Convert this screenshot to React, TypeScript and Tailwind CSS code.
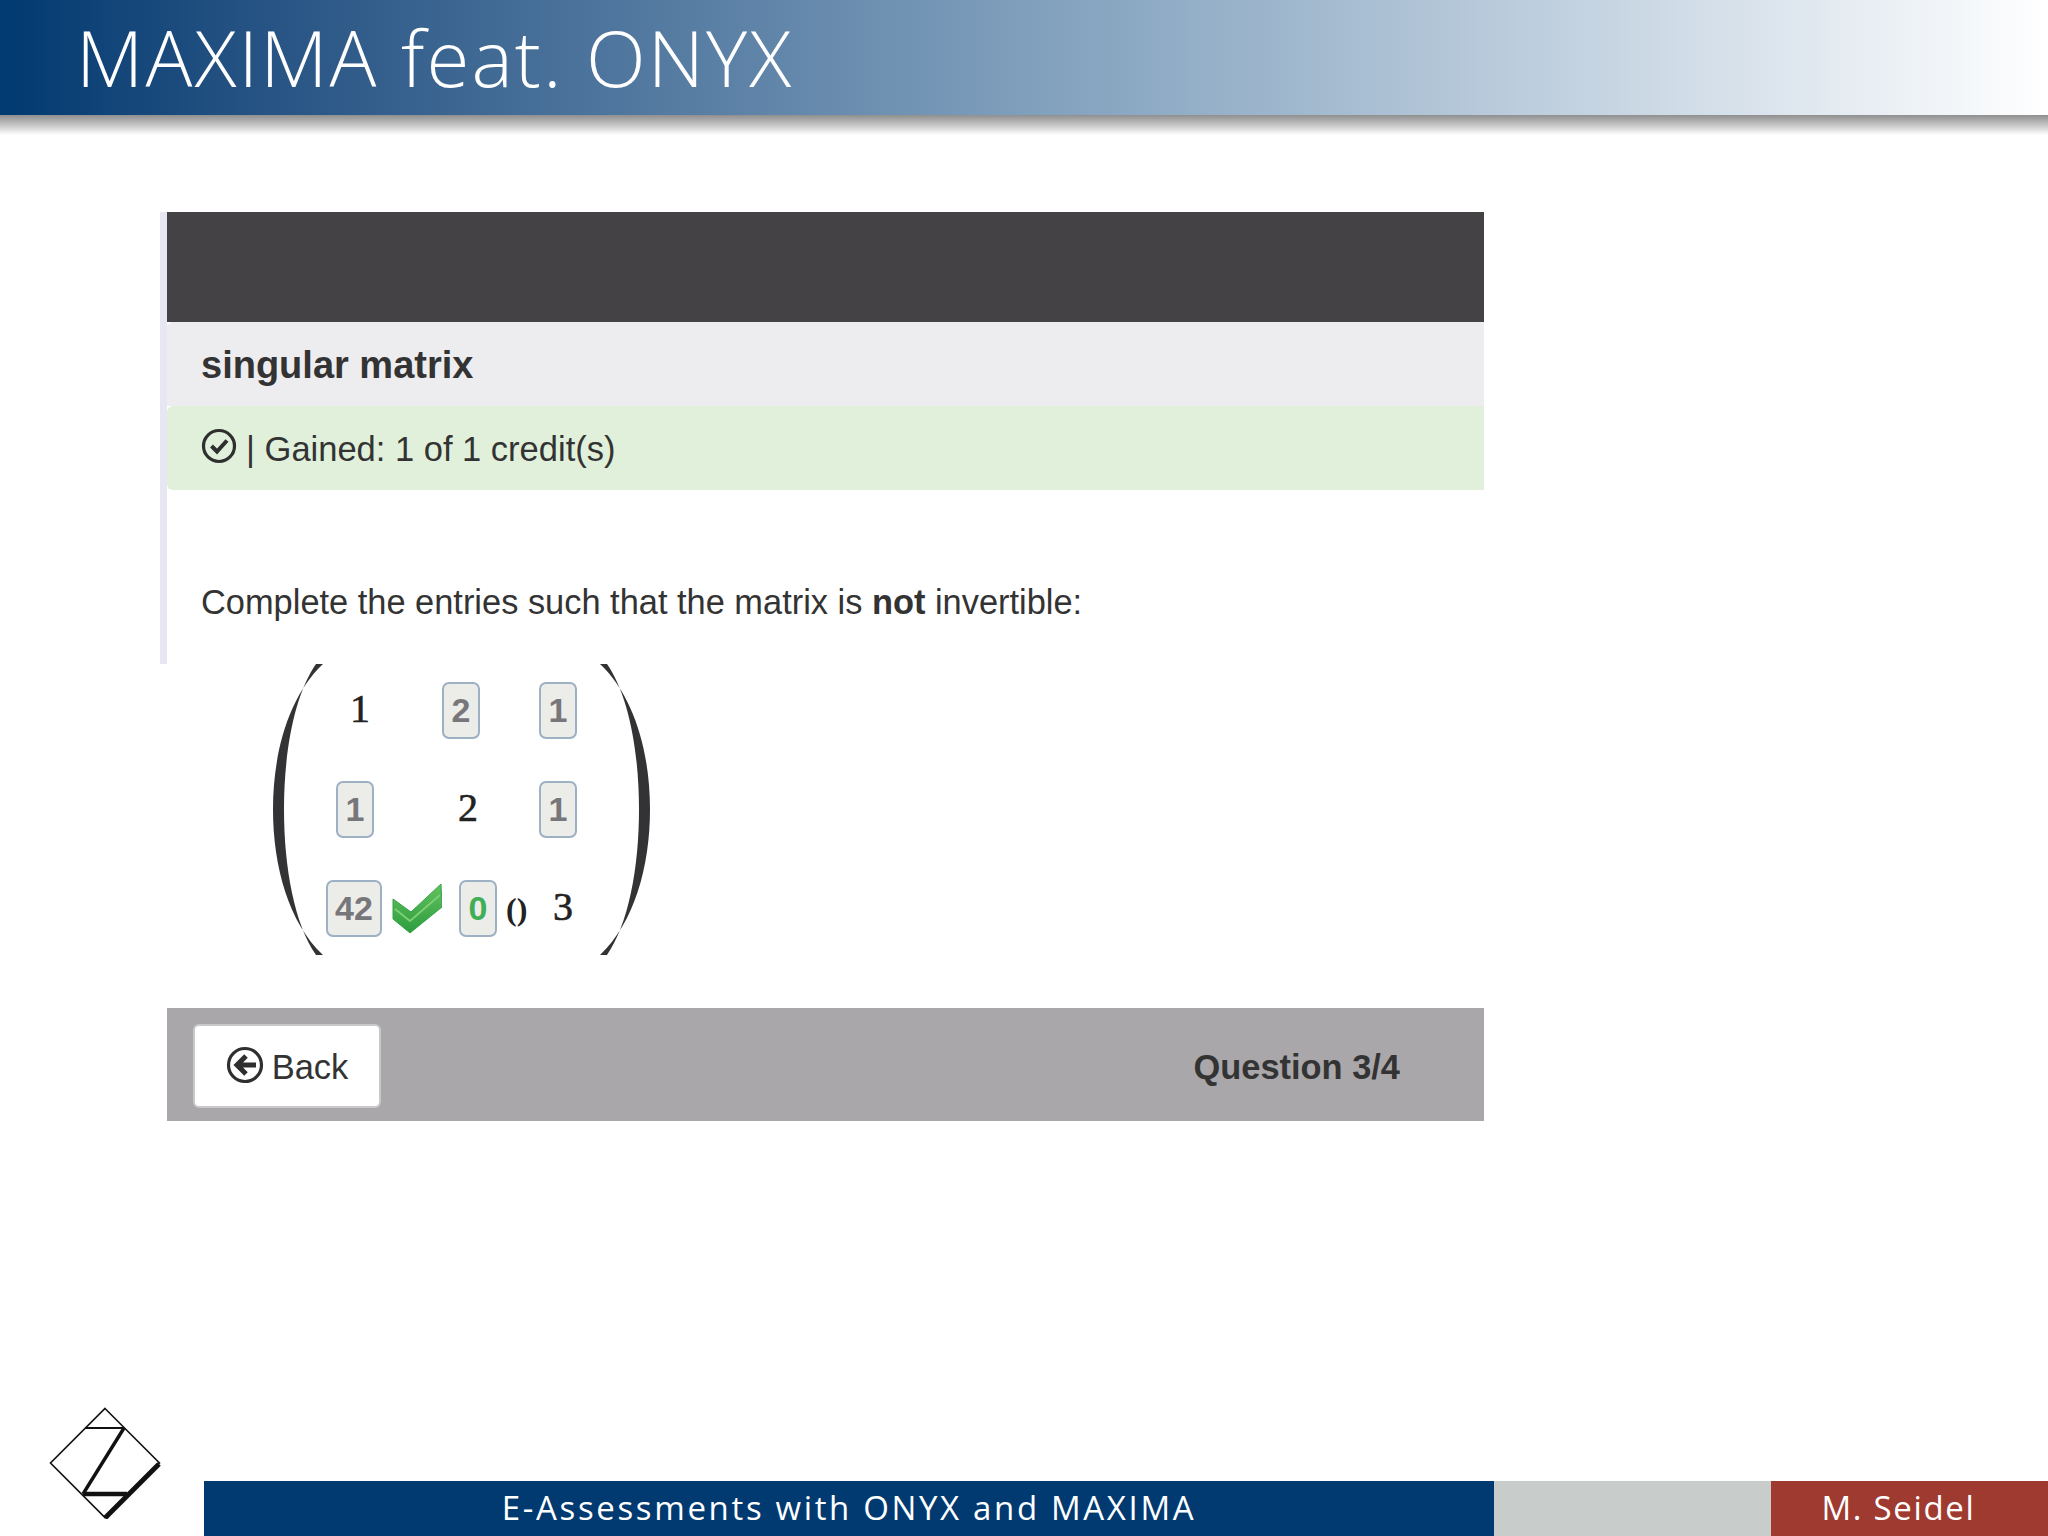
import { ReactNode } from "react";

const sans = "font-['Liberation_Sans',Arial,sans-serif]";
const math = "font-['Liberation_Serif','Times_New_Roman',serif]";

const InputBox = ({ value, wide, ok }: { value: string; wide?: boolean; ok?: boolean }) => (
  <span
    className={`${sans} ${wide ? "w-[56px]" : "w-[38px]"} ${ok ? "text-[#3fae57]" : "text-[#77767a]"} flex h-[57px] items-center justify-center rounded-[7px] border-2 border-[#9db0c4] bg-[#ecece8] text-[34px] font-bold`}
  >
    {value}
  </span>
);

const Num = ({ children }: { children: ReactNode }) => (
  <span className={`${math} -mt-[3px] text-[40px] leading-none text-[#222] [-webkit-text-stroke:0.6px_#222]`}>
    {children}
  </span>
);

const Bracket = ({ flip }: { flip?: boolean }) => (
  <svg width="50" height="291" viewBox="0 0 50 291" className={flip ? "-scale-x-100" : ""}>
    <path
      d="M50 0 C16 32 0 88 0 145.5 C0 203 16 259 50 291 L43 291 C22 261 11 205 11 145.5 C11 86 22 30 43 0 Z"
      fill="#333336"
    />
  </svg>
);

const Logo = () => (
  <svg width="112" height="112" viewBox="0 0 112 112" className="mb-[17px] ml-[49px]">
    <path d="M56 1.5 L110.5 56 L56 110.5 L1.5 56 Z" fill="#fff" stroke="#111" strokeWidth="1.6" />
    <path d="M36 21 H75" stroke="#111" strokeWidth="1.8" />
    <path d="M75 21 L34 87" stroke="#111" strokeWidth="3.4" />
    <path d="M34 87 H78" stroke="#111" strokeWidth="4.5" />
    <path d="M110 57 L56 111" stroke="#111" strokeWidth="5" />
  </svg>
);

export default function App() {
  return (
    <div className={`${sans} flex h-[1536px] w-[2048px] flex-col overflow-hidden bg-white`}>
      <header className="flex h-[115px] items-center bg-gradient-to-r from-[#003a70] via-[#7f9fbc] via-50% to-white pb-[2px] pl-[76px]">
        <h1 className="font-['Open_Sans',sans-serif] text-[78px] leading-none font-light tracking-[2.1px] text-white">
          MAXIMA feat. ONYX
        </h1>
      </header>
      <div className="h-[20px] bg-gradient-to-b from-[#8f8f8f] to-white" />

      <main className="flex-1 pt-[77px] pl-[160px]">
        <div className="w-[1324px]">
          <section className="h-[452px] border-l-[7px] border-[#e6e7f2]">
            <div className="h-[110px] bg-[#444245]" />
            <div className="flex h-[84px] items-center rounded-tl-md bg-[#edecef] pt-[2px] pl-[34px]">
              <h2 className="text-[38px] font-bold text-[#333]">singular matrix</h2>
            </div>
            <div className="flex h-[84px] items-center gap-[9px] rounded-l-md bg-[#e0f0da] pt-[4px] pl-[34px] text-[34.5px] text-[#333]">
              <svg width="36" height="36" viewBox="0 0 36 36" className="-mt-[8px]" fill="none" stroke="#2f2f2f">
                <circle cx="18" cy="18" r="15.5" strokeWidth="3.2" />
                <path d="M10.5 18 L16 23.5 L26 12.5" strokeWidth="4" />
              </svg>
              <span>| Gained: 1 of 1 credit(s)</span>
            </div>
            <p className="pt-[90px] pl-[34px] text-[34.4px] leading-[44px] text-[#333]">
              Complete the entries such that the matrix is <b>not</b> invertible:
            </p>
          </section>

          <section className="flex h-[344px] items-start pl-[113px]">
            <Bracket />
            <div className="grid w-[277px] grid-cols-[116px_97px_auto] grid-rows-[57px_57px_57px] gap-y-[42px] pt-[18px] pl-[3px]">
              <span className="flex items-center pl-[24px]"><Num>1</Num></span>
              <InputBox value="2" />
              <InputBox value="1" />

              <span className="flex items-center pl-[10px]"><InputBox value="1" /></span>
              <span className="flex items-center pl-[16px]"><Num>2</Num></span>
              <InputBox value="1" />

              <span className="flex items-center gap-[10px]">
                <InputBox value="42" wide />
                <svg width="50" height="50" viewBox="0 0 50 50">
                  <defs>
                    <linearGradient id="tick" x1="0" y1="0" x2="0" y2="1">
                      <stop offset="0" stopColor="#63c25e" />
                      <stop offset="1" stopColor="#2c9c3f" />
                    </linearGradient>
                  </defs>
                  <path d="M1 15 L19 28 L49 0 L50 23 L18 49 L1 35 Z" fill="url(#tick)" stroke="#37a447" />
                  <path d="M3 25 L18 37 L48 11" fill="none" stroke="#7ccf72" strokeWidth="2" />
                </svg>
              </span>
              <span className="flex items-center gap-[9px] pl-[17px]">
                <InputBox value="0" ok />
                <span className={`${math} text-[32px] font-bold text-[#222]`}>()</span>
              </span>
              <span className="flex items-center pl-[14px]"><Num>3</Num></span>
            </div>
            <Bracket flip />
          </section>

          <footer className="ml-[7px] flex h-[113px] items-center justify-between bg-[#a9a7aa] pt-[3px] pr-[84px] pl-[26px]">
            <button className="flex h-[84px] w-[188px] items-center justify-center gap-[8px] rounded-md border-2 border-[#c9c8ca] bg-white pt-[3px] text-[34.5px] text-[#333]">
              <svg width="38" height="38" viewBox="0 0 38 38" className="-mt-[6px]" fill="none" stroke="#2f2f2f">
                <circle cx="19" cy="19" r="16.5" strokeWidth="3.2" />
                <path d="M30 19 H12 M20 10 L11 19 L20 28" strokeWidth="5" />
              </svg>
              Back
            </button>
            <span className="pt-[3px] text-[34.4px] font-bold text-[#333]">Question 3/4</span>
          </footer>
        </div>
      </main>

      <div className="flex items-end">
        <div className="w-[204px]"><Logo /></div>
        <div className="flex h-[55px] w-[1290px] items-center justify-center bg-[#003a70] pb-[2px] font-['Open_Sans',sans-serif] text-[33px] tracking-[2.65px] text-white">
          E-Assessments with ONYX and MAXIMA
        </div>
        <div className="h-[55px] w-[277px] bg-[#c8ccca]" />
        <div className="flex h-[55px] w-[277px] items-center justify-center bg-[#9f3a30] pr-[22px] pb-[2px] font-['Open_Sans',sans-serif] text-[33px] tracking-[1.7px] text-white">
          M. Seidel
        </div>
      </div>
    </div>
  );
}
